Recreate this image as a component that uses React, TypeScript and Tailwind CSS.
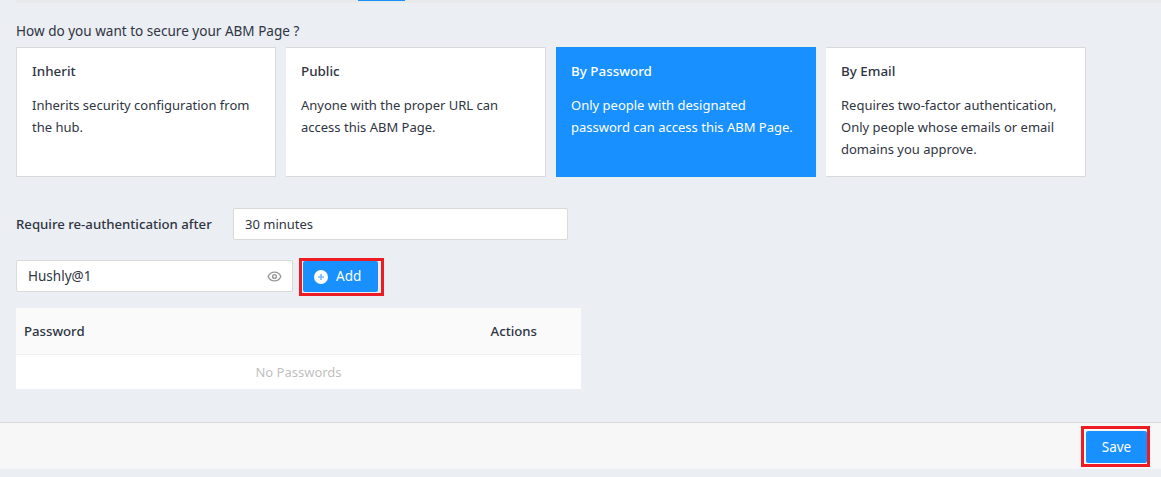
import { Eye } from "lucide-react"

const options = [
  { title: "Inherit", text: "Inherits security configuration from the hub." },
  { title: "Public", text: "Anyone with the proper URL can access this ABM Page." },
  { title: "By Password", text: "Only people with designated password can access this ABM Page.", active: true },
  { title: "By Email", text: "Requires two-factor authentication, Only people whose emails or email domains you approve." },
]

const AddIcon = () => (
  <svg width="14" height="14" viewBox="0 0 14 14">
    <circle cx="7" cy="7" r="7" fill="#fff" />
    <path d="M7 4v6M4 7h6" stroke="#74bcff" strokeWidth="1.6" />
  </svg>
)

const App = () => {
  return (
    <div className="w-[1161px] h-[477px] overflow-hidden flex flex-col bg-[#ebeef3] text-[13px] text-[#2f3542] font-['Noto_Sans',sans-serif]">
      <div className="ml-4 h-[3px] shrink-0 bg-[#e8e9eb] flex">
        <div className="ml-[342px] w-[47px] h-[1px] bg-[#1890ff]" />
      </div>

      <div className="flex-1 pl-4 flex flex-col">
        <div className="mt-[19px] h-[18px] leading-[18px] text-[13.55px]">How do you want to secure your ABM Page ?</div>

        <div className="mt-[7px] flex gap-[10px]">
          {options.map((o, i) =>
            o.active ? (
              <div key={o.title} className="w-[260px] h-[130px] px-[15px] pt-[14px] bg-[#1890ff] text-white">
                <div className="font-medium text-[13.4px] leading-5">{o.title}</div>
                <div className="mt-[13px] leading-[22px]">{o.text}</div>
              </div>
            ) : (
              <div
                key={o.title}
                className={
                  i === 0
                    ? "w-[260px] h-[130px] px-[15px] pt-[14px] bg-white border border-[#d9d9d9]"
                    : "w-[260px] h-[130px] px-[15px] pt-[14px] bg-white border border-l-0 border-[#d9d9d9]"
                }
              >
                <div className="font-medium text-[13.4px] leading-5 -mt-[1px]">{o.title}</div>
                <div className="mt-[13px] leading-[22px]">{o.text}</div>
              </div>
            )
          )}
        </div>

        <div className="mt-[31px] flex items-center">
          <div className="w-[217px] pt-[2px] font-medium text-[13.2px]">Require re-authentication after</div>
          <div className="w-[335px] h-[32px] flex items-center pt-[2px] px-[11px] bg-white border border-[#d9d9d9] rounded-[2px]">30 minutes</div>
        </div>

        <div className="mt-[18px] flex items-start">
          <div className="mt-[2px] w-[277px] h-[32px] flex items-center justify-between px-[11px] bg-white border border-[#d9d9d9] rounded-[2px] text-[13.5px]">
            <span>Hushly@1</span>
            <Eye size={15} strokeWidth={2.3} className="text-[#9a9a9a] -mr-[1px]" />
          </div>
          <div className="ml-[6px] w-[85px] h-[38px] border-[3px] border-[#ed1c24] pl-[1px]">
            <button className="w-[75px] h-[31px] flex items-center gap-2 pl-[11px] bg-[#1890ff] text-white text-[13.5px] rounded-[2px]">
              <AddIcon />
              Add
            </button>
          </div>
        </div>

        <div className="mt-[12px] w-[565px]">
          <div className="h-[47px] flex items-center justify-between pt-[2px] pl-2 pr-[44px] bg-[#fafafa] border-b border-[#f0f0f0] font-medium text-[13.2px]">
            <span>Password</span>
            <span>Actions</span>
          </div>
          <div className="h-[34px] flex items-center justify-center pt-[2px] bg-white text-[#bfbfbf]">No Passwords</div>
        </div>
      </div>

      <div className="h-[47px] shrink-0 mb-2 flex items-center justify-end pr-[11px] bg-[#f7f7f7] border-t border-[#dcdcdc]">
        <div className="w-[69px] h-[41px] border-[3px] border-[#ed1c24] pl-[2px] pt-[2px]">
          <button className="w-[61px] h-[32px] pt-[2px] bg-[#1890ff] text-white text-[13.5px] rounded-[2px]">Save</button>
        </div>
      </div>
    </div>
  )
}

export default App
